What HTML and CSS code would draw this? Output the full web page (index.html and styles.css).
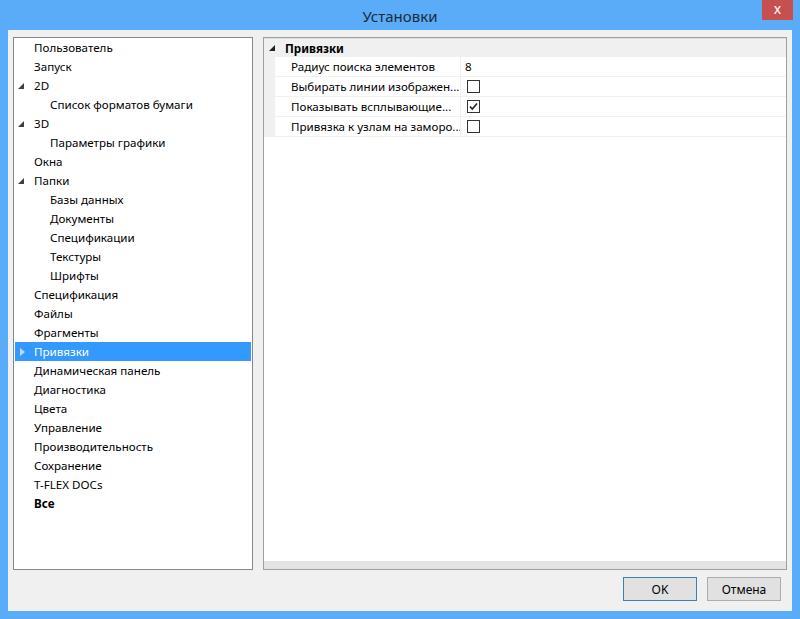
FILE: index.html
```html
<!doctype html>
<html lang="ru">
  <head>
    <meta charset="UTF-8" />
    <title>Установки</title>
    <link rel="stylesheet" href="styles.css">
  </head>
  <body>
    <div class="window">
      <div class="titlebar">
        <span class="title">Установки</span>
        <div class="close-btn">x</div>
      </div>

      <div class="client">
        <div class="panels">
          <div class="tree">
            <div class="node">Пользователь</div>
            <div class="node">Запуск</div>
            <div class="node"><svg class="exp" width="6" height="6" viewBox="0 0 6 6"><path d="M6 0V6H0Z" fill="#404040"/></svg>2D</div>
            <div class="node child">Список форматов бумаги</div>
            <div class="node"><svg class="exp" width="6" height="6" viewBox="0 0 6 6"><path d="M6 0V6H0Z" fill="#404040"/></svg>3D</div>
            <div class="node child">Параметры графики</div>
            <div class="node">Окна</div>
            <div class="node"><svg class="exp" width="6" height="6" viewBox="0 0 6 6"><path d="M6 0V6H0Z" fill="#404040"/></svg>Папки</div>
            <div class="node child">Базы данных</div>
            <div class="node child">Документы</div>
            <div class="node child">Спецификации</div>
            <div class="node child">Текстуры</div>
            <div class="node child">Шрифты</div>
            <div class="node">Спецификация</div>
            <div class="node">Файлы</div>
            <div class="node">Фрагменты</div>
            <div class="node selected"><svg class="coll" width="5" height="8" viewBox="0 0 5 8"><path d="M0 0L5 4L0 8Z" fill="#bcd9f7"/></svg>Привязки</div>
            <div class="node">Динамическая панель</div>
            <div class="node">Диагностика</div>
            <div class="node">Цвета</div>
            <div class="node">Управление</div>
            <div class="node">Производительность</div>
            <div class="node">Сохранение</div>
            <div class="node">T-FLEX DOCs</div>
            <div class="node bold">Все</div>
          </div>

          <div class="grid">
            <div class="category">
              <svg class="cat-arrow" width="6" height="6" viewBox="0 0 6 6"><path d="M6 0V6H0Z" fill="#202020"/></svg>
              <span>Привязки</span>
            </div>
            <div class="prop">
              <div class="gutter"></div>
              <div class="name">Радиус поиска элементов</div>
              <div class="value">8</div>
            </div>
            <div class="prop">
              <div class="gutter"></div>
              <div class="name">Выбирать линии изображен...</div>
              <div class="value"><span class="check"></span></div>
            </div>
            <div class="prop">
              <div class="gutter"></div>
              <div class="name">Показывать всплывающие...</div>
              <div class="value">
                <span class="check">
                  <svg width="11" height="11" viewBox="0 0 11 11"><path d="M2 5.5L4.3 8L9 2.5" fill="none" stroke="#222" stroke-width="1.6"/></svg>
                </span>
              </div>
            </div>
            <div class="prop">
              <div class="gutter"></div>
              <div class="name">Привязка к узлам на заморо...</div>
              <div class="value"><span class="check"></span></div>
            </div>
            <div class="grid-fill"></div>
            <div class="grid-bottom"></div>
          </div>
        </div>

        <div class="buttons">
          <button class="btn default">OK</button>
          <button class="btn">Отмена</button>
        </div>
      </div>
    </div>
  </body>
</html>
```

FILE: styles.css
```css
body {
  margin: 0;
  font-family: "Noto Sans", "Open Sans", sans-serif;
  font-size: 11.6px;
  color: #000;
  background-color: #5aabf8;
}
.window {
  width: 800px;
  height: 619px;
  background-color: #5aabf8;
  display: flex;
  flex-direction: column;
}
.titlebar {
  height: 30px;
  position: relative;
  display: flex;
  justify-content: center;
  align-items: center;
}
.title {
  font-size: 15px;
  color: #1c2a38;
  margin-top: 1px;
}
.close-btn {
  position: absolute;
  top: 0;
  right: 7px;
  width: 31px;
  height: 20px;
  background-color: #c7504e;
  color: #fff;
  font-size: 14px;
  text-align: center;
  line-height: 18px;
}
.client {
  flex: 1;
  margin: 0 8px 8px 8px;
  background-color: #f0f0f0;
  padding: 7px 5px 10px 5px;
  display: flex;
  flex-direction: column;
}
.panels {
  display: flex;
  gap: 10px;
  height: 533px;
}
.tree {
  width: 236px;
  border: 1px solid #828790;
  background-color: #fff;
  padding: 0 1px;
}
.node {
  height: 19px;
  line-height: 19px;
  padding-left: 19px;
  position: relative;
  white-space: nowrap;
}
.node.child {
  padding-left: 35px;
}
.node.bold {
  font-weight: bold;
}
.node.selected {
  background-color: #3399ff;
  color: #fff;
}
.exp {
  position: absolute;
  left: 3px;
  top: 7px;
}
.coll {
  position: absolute;
  left: 5px;
  top: 6px;
}
.grid {
  flex: 1;
  border: 1px solid #a0a0a0;
  background-color: #fff;
  display: flex;
  flex-direction: column;
}
.category {
  height: 18px;
  background-color: #f0f0f0;
  border-top: 1px solid #dcdcdc;
  display: flex;
  align-items: center;
  font-weight: bold;
  position: relative;
  padding-left: 21px;
}
.cat-arrow {
  position: absolute;
  left: 5px;
  top: 6px;
}
.prop {
  display: flex;
  height: 20px;
}
.gutter {
  width: 11px;
  background-color: #f0f0f0;
}
.name {
  width: 169px;
  padding-left: 16px;
  border-right: 1px solid #f0f0f0;
  border-bottom: 1px solid #f0f0f0;
  line-height: 19px;
  white-space: nowrap;
  overflow: hidden;
}
.value {
  flex: 1;
  padding-left: 4px;
  border-bottom: 1px solid #f0f0f0;
  line-height: 19px;
  display: flex;
  align-items: center;
}
.check {
  width: 11px;
  height: 11px;
  border: 1px solid #333;
  background-color: #fff;
  margin-left: 2px;
  display: flex;
  align-items: center;
  justify-content: center;
}
.grid-fill {
  flex: 1;
}
.grid-bottom {
  height: 8px;
  background-color: #e3e3e3;
}
.buttons {
  display: flex;
  justify-content: flex-end;
  gap: 10px;
  margin-top: 7px;
  padding-right: 6px;
}
.btn {
  width: 74px;
  height: 24px;
  font-family: "Noto Sans", "Open Sans", sans-serif;
  font-size: 12px;
  background-color: #e1e1e1;
  border: 1px solid #adadad;
  padding: 0;
  color: #000;
}
.btn.default {
  border-color: #3c7fb1;
}
```
